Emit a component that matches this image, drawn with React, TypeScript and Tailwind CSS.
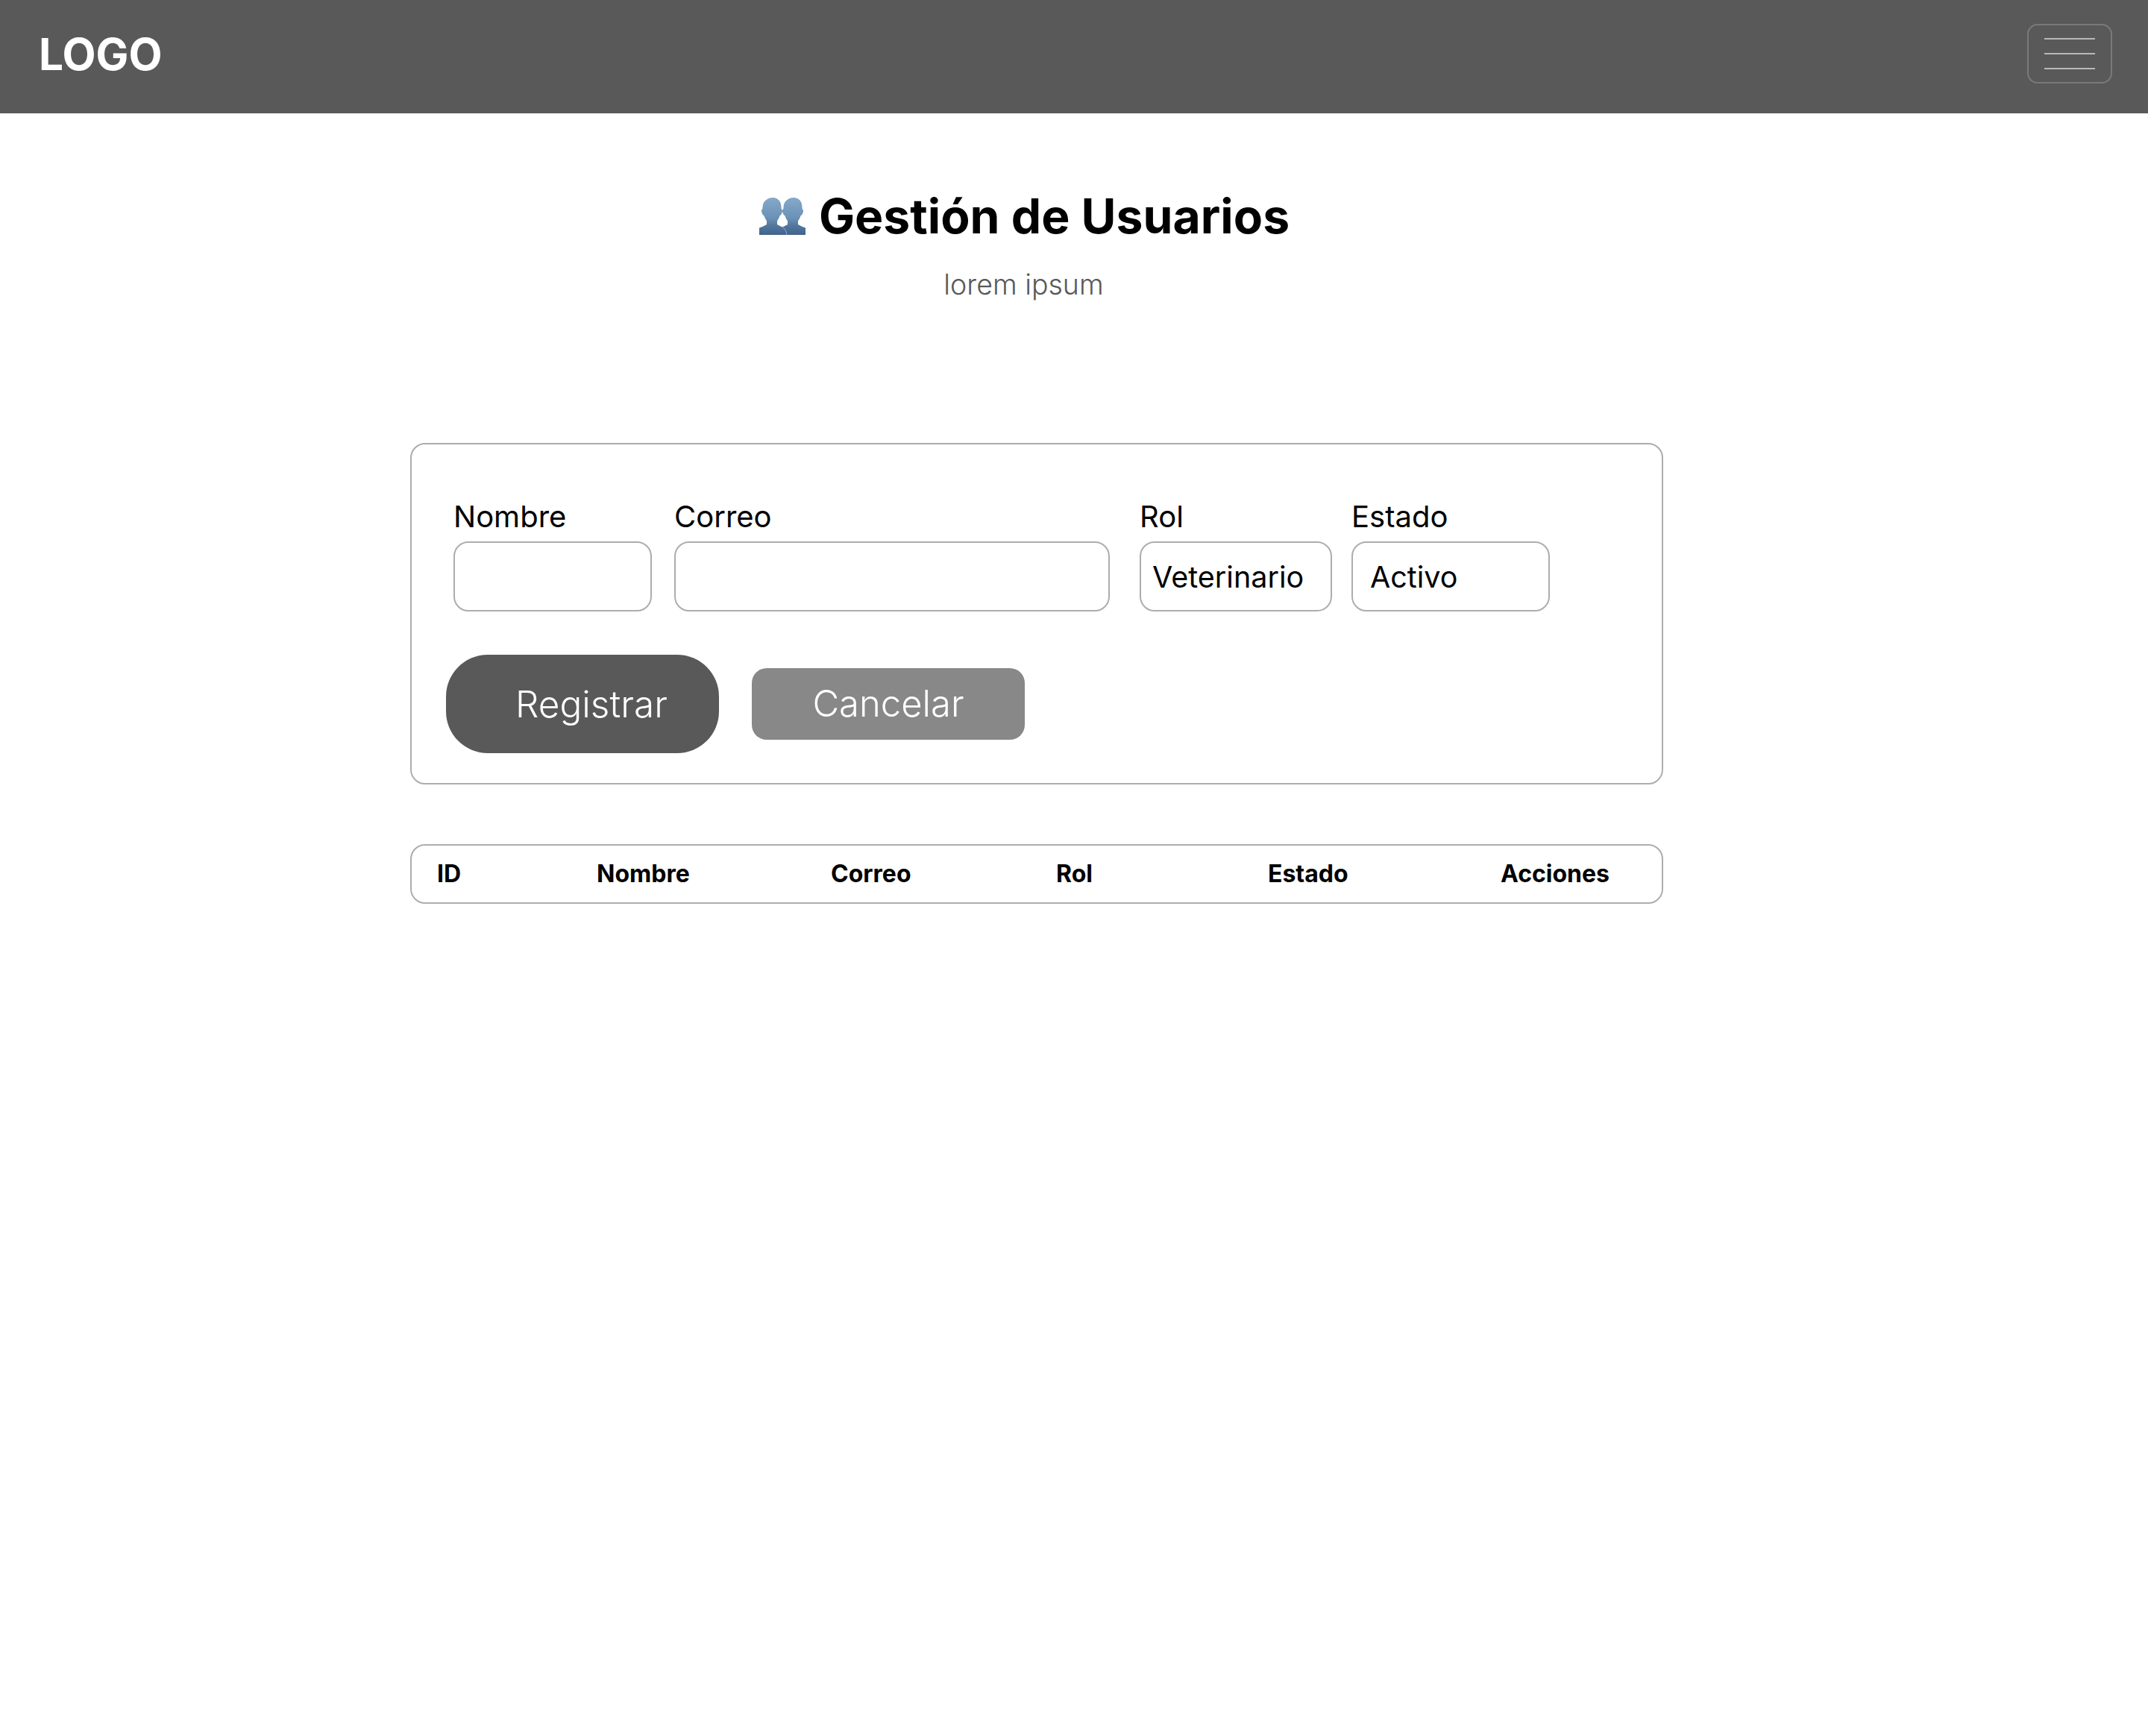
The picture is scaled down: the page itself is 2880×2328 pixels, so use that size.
const fields = [
  { label: "Nombre", box: "w-[266px] mr-[30px]", value: "", text: "pl-0" },
  { label: "Correo", box: "w-[584px] mr-[40px]", value: "", text: "pl-0" },
  { label: "Rol", box: "w-[258px] mr-[26px]", value: "Veterinario", text: "pl-[15px]" },
  { label: "Estado", box: "w-[266px]", value: "Activo", text: "pl-[23px]" },
];

function UsersEmoji() {
  const bust = "M18 1c7.500 0 11.500 5.500 11.500 13 0 2 .4 3 1.300 3.600.6.500.2 3-1 5.300-.8 1.500-1.600 2-2.200 2.200-.9 3.200-2.300 5.600-3.600 7.200v4.700c3 2 6 3.200 10 4.400v9.600H0v-9.600c4-1.200 7-2.400 10-4.400v-4.700c-1.300-1.600-2.700-4-3.600-7.200-.6-.2-1.400-.7-2.200-2.200-1.200-2.300-1.600-4.800-1-5.300.9-.6 1.300-1.600 1.300-3.600C4.500 6.500 10.500 1 18 1z";
  return (
    <svg width="64" height="52" viewBox="0 0 64 52" className="shrink-0">
      <defs>
        <linearGradient id="bustFill" x1="0" y1="0" x2="0" y2="1">
          <stop offset="0" stopColor="#86a9c9" />
          <stop offset="0.55" stopColor="#6a91b6" />
          <stop offset="0.75" stopColor="#52779e" />
          <stop offset="1" stopColor="#41638c" />
        </linearGradient>
      </defs>
      <path d={bust} fill="url(#bustFill)" />
      <path d={bust} fill="url(#bustFill)" transform="translate(28 0)" />
      <path d="M31 41c3 1 5 4 6 10" fill="none" stroke="#8fb0cd" strokeWidth="1" />
    </svg>
  );
}

export default function App() {
  return (
    <div className="min-h-[2328px] bg-white font-['Inter',sans-serif] text-black">
      <nav className="flex h-[152px] items-center justify-between bg-[#595959] pb-[8px] pl-[52px] pr-[48px]">
        <a className="mt-[3px] text-[58.5px] font-bold leading-none text-white">LOGO</a>
        <button className="flex h-[80px] w-[114px] flex-col items-center justify-center gap-[18px] rounded-[14px] border-2 border-[#7a7a7a]">
          <span className="h-[2px] w-[68px] bg-[#b8b8b8]" />
          <span className="h-[2px] w-[68px] bg-[#b8b8b8]" />
          <span className="h-[2px] w-[68px] bg-[#b8b8b8]" />
        </button>
      </nav>

      <main className="ml-[550px] w-[1680px] pt-[100px]">
        <header className="pr-[33px] text-center">
          <h1 className="flex items-center justify-center gap-[16px] text-[64.2px] font-bold leading-[76px]">
            <UsersEmoji />
            <span>Gestión de Usuarios</span>
          </h1>
          <p className="mt-[24px] pr-[2px] text-[37.5px] font-light leading-[60px] text-[#595959]">lorem ipsum</p>
        </header>

        <section className="mt-[182px] h-[458px] rounded-[20px] border-2 border-[#adadad] pl-[56px] pt-[70px]">
          <div className="flex items-end">
            {fields.map((f) => (
              <label key={f.label} className={`flex flex-col ${f.box}`}>
                <span className="pb-[6px] text-[40px] leading-[54px]">{f.label}</span>
                <span className={`flex h-[94px] items-center rounded-[20px] border-2 border-[#adadad] pt-[3px] text-[39.5px] ${f.text}`}>{f.value}</span>
              </label>
            ))}
          </div>
          <div className="mt-[58px] ml-[-10px] flex items-center gap-[44px]">
            <button className="h-[132px] w-[366px] rounded-[56px] bg-[#595959] pl-[24px] text-[49.5px] font-light text-white">Registrar</button>
            <button className="h-[96px] w-[366px] rounded-[20px] bg-[#888888] text-[49px] font-light text-white">Cancelar</button>
          </div>
        </section>

        <section className="mt-[80px] grid h-[80px] grid-cols-[214px_314px_302px_284px_312px_229px] items-center rounded-[20px] border-2 border-[#adadad] pl-[34px] text-[32px] font-bold">
          <span>ID</span>
          <span>Nombre</span>
          <span>Correo</span>
          <span>Rol</span>
          <span>Estado</span>
          <span>Acciones</span>
        </section>
      </main>
    </div>
  );
}
